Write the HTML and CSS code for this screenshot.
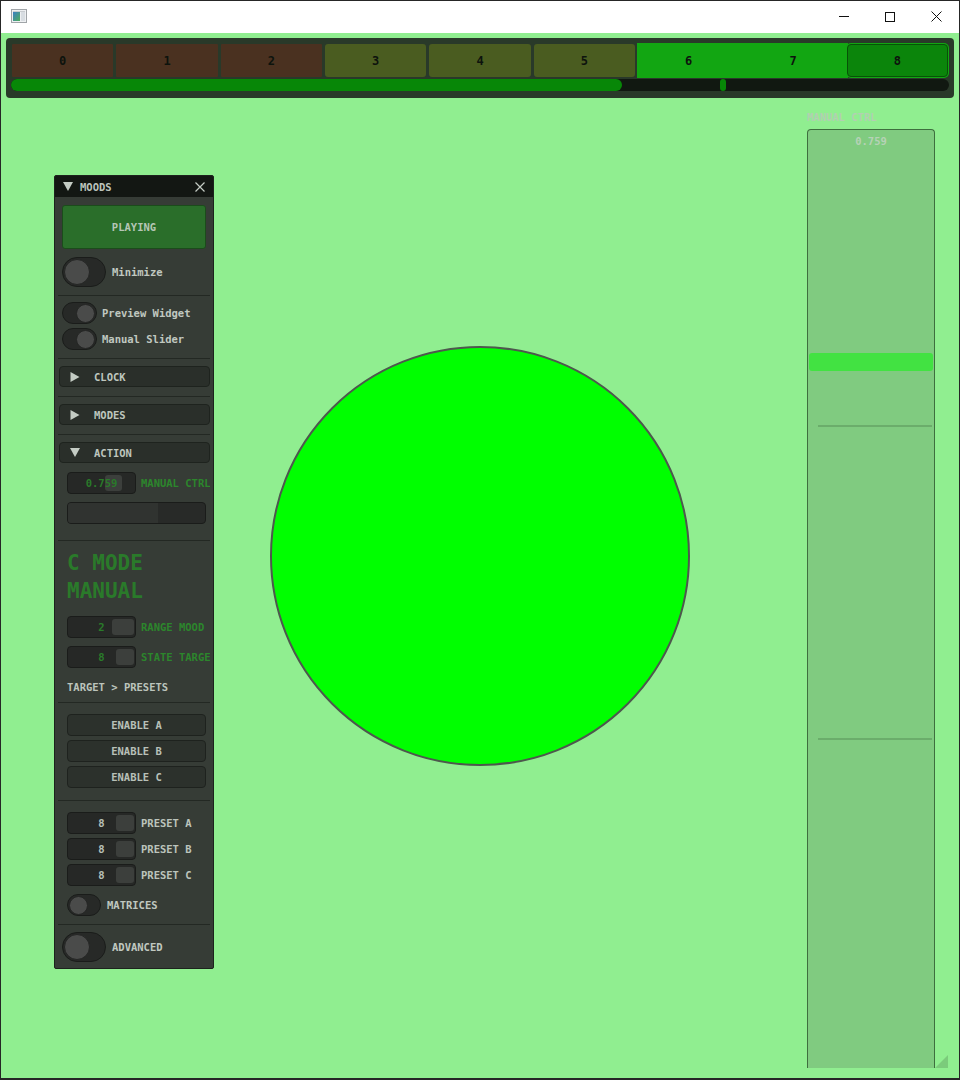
FILE: index.html
```html
<!DOCTYPE html>
<html>
<head>
<meta charset="utf-8">
<title>Moods</title>
<link rel="stylesheet" href="styles.css">
</head>
<body>
<div class="window">
  <div class="titlebar">
    <svg class="app-icon" width="16" height="14" viewBox="0 0 16 14">
      <defs>
        <linearGradient id="ig" x1="0" y1="0" x2="1" y2="1">
          <stop offset="0" stop-color="#3b7fc4"/>
          <stop offset="1" stop-color="#4fae5a"/>
        </linearGradient>
      </defs>
      <rect x="0.5" y="0.5" width="15" height="13" fill="#eef0f2" stroke="#a0a4a8"/>
      <rect x="2" y="3" width="7" height="9" fill="url(#ig)"/>
      <rect x="10" y="3" width="4" height="9" fill="#d8dde2"/>
      <rect x="2" y="2" width="12" height="1" fill="#c8ccd0"/>
    </svg>
    <div class="controls">
      <div class="ctl"><svg width="10" height="10" viewBox="0 0 10 10"><line x1="0" y1="4.5" x2="10.5" y2="4.5" stroke="#111" stroke-width="1"/></svg></div>
      <div class="ctl"><svg width="10" height="10" viewBox="0 0 10 10"><rect x="0.5" y="0.5" width="9" height="9" fill="none" stroke="#111" stroke-width="1"/></svg></div>
      <div class="ctl"><svg width="11" height="11" viewBox="0 0 11 11"><path d="M0.5 0.5 L10.5 10.5 M10.5 0.5 L0.5 10.5" stroke="#111" stroke-width="1"/></svg></div>
    </div>
  </div>

  <div class="canvas">
    <div class="topbar">
      <div class="cells">
        <div class="cell c-brown">0</div>
        <div class="cell c-brown">1</div>
        <div class="cell c-brown">2</div>
        <div class="cell c-olive">3</div>
        <div class="cell c-olive">4</div>
        <div class="cell c-olive">5</div>
        <div class="cell c-green">6</div>
        <div class="cell c-green">7</div>
        <div class="cell c-active">8</div>
      </div>
      <div class="progress">
        <div class="progress-fill" style="width:611px"></div>
        <div class="progress-mark" style="left:709px"></div>
      </div>
    </div>

    <div class="moods">
      <div class="moods-head">
        <svg class="tri" width="10" height="9" viewBox="0 0 10 9"><path d="M0 0 H10 L5 9 Z" fill="#c4ccc4"/></svg>
        <span class="moods-title">MOODS</span>
        <svg class="close" width="10" height="10" viewBox="0 0 10 10"><path d="M0.5 0.5 L9.5 9.5 M9.5 0.5 L0.5 9.5" stroke="#c4ccc4" stroke-width="1.2"/></svg>
      </div>
      <div class="moods-body">
        <div class="play">PLAYING</div>

        <div class="trow mt8">
          <div class="toggle lg"><div class="knob"></div></div>
          <span class="tlabel">Minimize</span>
        </div>

        <div class="sep mt8"></div>

        <div class="trow sm-row mt6">
          <div class="toggle sm on"><div class="knob"></div></div>
          <span class="tlabel">Preview Widget</span>
        </div>
        <div class="trow sm-row mt4">
          <div class="toggle sm on"><div class="knob"></div></div>
          <span class="tlabel">Manual Slider</span>
        </div>

        <div class="sep mt8"></div>

        <div class="hdr mt7">
          <svg class="hdr-tri" width="9" height="10" viewBox="0 0 9 10"><path d="M0 0 L9 5 L0 10 Z" fill="#c4ccc4"/></svg>
          <span>CLOCK</span>
        </div>

        <div class="sep mt9"></div>

        <div class="hdr mt7">
          <svg class="hdr-tri" width="9" height="10" viewBox="0 0 9 10"><path d="M0 0 L9 5 L0 10 Z" fill="#c4ccc4"/></svg>
          <span>MODES</span>
        </div>

        <div class="sep mt9"></div>

        <div class="hdr mt7">
          <svg class="hdr-tri" width="10" height="9" viewBox="0 0 10 9"><path d="M0 0 H10 L5 9 Z" fill="#c4ccc4"/></svg>
          <span>ACTION</span>
        </div>

        <div class="irow mt9">
          <div class="drag"><div class="grab" style="left:37px;width:17px"></div><div class="val">0.759</div></div>
          <span class="ilabel green">MANUAL CTRL</span>
        </div>

        <div class="slider mt8"><div class="slider-fill" style="width:90px"></div></div>

        <div class="sep mt16"></div>

        <div class="cmode">C MODE<br>MANUAL</div>

        <div class="irow mt11">
          <div class="drag"><div class="grab" style="left:44px;width:22px"></div><div class="val">2</div></div>
          <span class="ilabel green">RANGE MOOD</span>
        </div>
        <div class="irow mt8">
          <div class="drag"><div class="grab" style="left:48px;width:18px"></div><div class="val">8</div></div>
          <span class="ilabel green">STATE TARGE</span>
        </div>

        <div class="crumb">TARGET &gt; PRESETS</div>

        <div class="sep mt8"></div>

        <div class="btn mt11">ENABLE A</div>
        <div class="btn mt4">ENABLE B</div>
        <div class="btn mt4">ENABLE C</div>

        <div class="sep mt12"></div>

        <div class="irow mt11">
          <div class="drag"><div class="grab" style="left:48px;width:18px"></div><div class="val light">8</div></div>
          <span class="ilabel">PRESET A</span>
        </div>
        <div class="irow mt4">
          <div class="drag"><div class="grab" style="left:48px;width:18px"></div><div class="val light">8</div></div>
          <span class="ilabel">PRESET B</span>
        </div>
        <div class="irow mt4">
          <div class="drag"><div class="grab" style="left:48px;width:18px"></div><div class="val light">8</div></div>
          <span class="ilabel">PRESET C</span>
        </div>

        <div class="trow indent mt8">
          <div class="toggle md"><div class="knob"></div></div>
          <span class="tlabel caps">MATRICES</span>
        </div>

        <div class="sep mt8"></div>

        <div class="trow mt7">
          <div class="toggle lg"><div class="knob"></div></div>
          <span class="tlabel caps">ADVANCED</span>
        </div>
      </div>
    </div>

    <div class="orb"></div>

    <div class="vwidget">
      <div class="vlabel">MANUAL CTRL</div>
      <div class="vbox">
        <div class="vval">0.759</div>
        <div class="vgrab" style="top:223px"></div>
        <div class="vline" style="top:295px"></div>
        <div class="vline" style="top:608px"></div>
      </div>
    </div>

    <div class="grip"></div>
  </div>
</div>
</body>
</html>
```

FILE: styles.css
```css
html, body {
  margin: 0;
  padding: 0;
  background: #ffffff;
}

.window {
  width: 960px;
  height: 1080px;
  box-sizing: border-box;
  border: 1px solid #262626;
  border-bottom-width: 2px;
  display: flex;
  flex-direction: column;
  font-family: "DejaVu Sans Mono", "Liberation Mono", monospace;
  font-size: 10.5px;
}

.titlebar {
  height: 32px;
  flex: none;
  background: #ffffff;
  display: flex;
  align-items: center;
  padding-left: 10px;
}

.app-icon {
  margin-top: -3px;
}

.controls {
  margin-left: auto;
  display: flex;
  height: 100%;
}

.ctl {
  width: 46px;
  height: 100%;
  display: flex;
  align-items: center;
  justify-content: center;
}

.ctl svg {
  margin-top: -1px;
}

.canvas {
  flex: 1;
  position: relative;
  background: #90ee90;
  overflow: hidden;
}

/* ---------- top bar ---------- */
.topbar {
  margin: 5px 5px 0 5px;
  height: 60px;
  box-sizing: border-box;
  background: #293929;
  border-radius: 4px;
  padding: 6px 6px 0 6px;
}

.cells {
  display: grid;
  grid-template-columns: repeat(9, 1fr);
  column-gap: 3px;
  height: 33px;
}

.cell {
  display: flex;
  align-items: center;
  justify-content: center;
  font-weight: bold;
  font-size: 12px;
  color: #0d130d;
}

.c-brown {
  background: #4a3120;
  border-radius: 1px;
}

.c-olive {
  background: #4a5c20;
  border-radius: 3px;
}

.c-green {
  background: #12a612;
  box-shadow: 0 0 0 1px #12a612, 3px 0 0 1px #12a612;
}

.c-active {
  background: #0b850b;
  border: 1.5px solid #075207;
  border-radius: 4px;
  box-shadow: 0 0 0 1px #12a612;
}

.progress {
  position: relative;
  margin: 2px -1px 0 -1px;
  height: 12px;
  background: #111811;
  border-radius: 6px;
}

.progress-fill {
  height: 100%;
  background: #078707;
  border-radius: 6px;
}

.progress-mark {
  position: absolute;
  top: 0;
  width: 6px;
  height: 12px;
  background: #078707;
  border-radius: 3px;
}

/* ---------- moods window ---------- */
.moods {
  position: absolute;
  left: 53px;
  top: 142px;
  width: 160px;
  height: 794px;
  box-sizing: border-box;
  border: 1px solid #1d231d;
  border-radius: 2px;
  background: #363c36;
  overflow: hidden;
  color: #bec6be;
}

.moods-head {
  height: 21px;
  background: #131713;
  display: flex;
  align-items: center;
  padding: 0 8px;
}

.moods-title {
  margin-left: 7px;
  font-weight: bold;
  color: #bcc4bc;
}

.moods-head .close {
  margin-left: auto;
}

.moods-body {
  display: flex;
  flex-direction: column;
  padding: 0 7px;
}

.mt4 { margin-top: 4px; }
.mt6 { margin-top: 6px; }
.mt7 { margin-top: 7px; }
.mt8 { margin-top: 8px; }
.mt9 { margin-top: 9px; }
.mt11 { margin-top: 11px; }
.mt12 { margin-top: 12px; }
.mt16 { margin-top: 16px; }

.play {
  margin-top: 8px;
  height: 44px;
  box-sizing: border-box;
  background: #2a6e2a;
  border: 1px solid #1b4c1b;
  border-radius: 3px;
  display: flex;
  align-items: center;
  justify-content: center;
  font-weight: bold;
  color: #b6c6b6;
}

.trow {
  display: flex;
  align-items: center;
}

.tlabel {
  margin-left: 6px;
  color: #c0c8c0;
  font-weight: bold;
}

.sm-row .tlabel {
  margin-left: 5px;
}

.toggle {
  position: relative;
  flex: none;
  box-sizing: border-box;
  background: #272927;
  border: 1px solid #1a1c1a;
}

.toggle .knob {
  position: absolute;
  top: 50%;
  box-sizing: border-box;
  background: #4a4b4a;
  border: 1px solid #252625;
  border-radius: 50%;
}

.toggle.lg {
  width: 44px;
  height: 30px;
  border-radius: 15px;
}

.toggle.lg .knob {
  left: 1px;
  width: 26px;
  height: 26px;
  margin-top: -13px;
}

.toggle.sm {
  width: 35px;
  height: 22px;
  border-radius: 11px;
}

.toggle.sm .knob {
  right: 1px;
  width: 19px;
  height: 19px;
  margin-top: -9.5px;
}

.toggle.md {
  width: 34px;
  height: 22px;
  border-radius: 11px;
}

.toggle.md .knob {
  left: 1px;
  width: 19px;
  height: 19px;
  margin-top: -9.5px;
}

.indent {
  margin-left: 5px;
}

.trow.indent .tlabel {
  margin-left: 6px;
}

.sep {
  height: 1px;
  margin-left: -4px;
  margin-right: -4px;
  background: #232823;
}

.hdr {
  height: 21px;
  box-sizing: border-box;
  margin-left: -3px;
  margin-right: -4px;
  background: #2a2f2a;
  border: 1px solid #1e231e;
  border-radius: 4px;
  display: flex;
  align-items: center;
  padding-left: 10px;
  font-weight: bold;
  color: #bec6be;
}

.hdr-tri {
  flex: none;
  width: 10px;
  margin-right: 14px;
}

.irow {
  display: flex;
  align-items: center;
  margin-left: 5px;
  margin-right: -4px;
  overflow: hidden;
  white-space: nowrap;
}

.drag {
  position: relative;
  flex: none;
  width: 69px;
  height: 22px;
  box-sizing: border-box;
  background: #262826;
  border: 1px solid #1a1c1a;
  border-radius: 4px;
}

.drag .grab {
  position: absolute;
  top: 2px;
  bottom: 2px;
  background: #3c3f3c;
  border-radius: 3px;
}

.drag .val {
  position: relative;
  text-align: center;
  line-height: 20px;
  color: #2a7a2a;
  font-weight: bold;
}

.drag .val.light {
  color: #b8c0b8;
}

.ilabel {
  margin-left: 5px;
  font-weight: bold;
  color: #bcc4bc;
}

.ilabel.green {
  color: #2c862c;
}

.slider {
  position: relative;
  margin-left: 5px;
  height: 22px;
  box-sizing: border-box;
  background: #282a28;
  border: 1px solid #1a1c1a;
  border-radius: 4px;
  overflow: hidden;
}

.slider-fill {
  height: 100%;
  background: #303330;
}

.cmode {
  margin-left: 5px;
  margin-top: 8px;
  font-size: 21px;
  line-height: 28px;
  font-weight: bold;
  color: #2a7a2a;
}

.crumb {
  margin-left: 5px;
  margin-top: 12px;
  line-height: 14px;
  font-weight: bold;
  color: #bcc4bc;
}

.btn {
  margin-left: 5px;
  height: 22px;
  box-sizing: border-box;
  background: #2c312c;
  border: 1px solid #1e221e;
  border-radius: 4px;
  display: flex;
  align-items: center;
  justify-content: center;
  font-weight: bold;
  color: #b8c0b8;
}

/* ---------- orb ---------- */
.orb {
  position: absolute;
  left: 269px;
  top: 313px;
  width: 420px;
  height: 420px;
  box-sizing: border-box;
  border: 2px solid #4d584d;
  border-radius: 50%;
  background: #00ff00;
}

/* ---------- vertical slider ---------- */
.vwidget {
  position: absolute;
  left: 806px;
  top: 77px;
  width: 128px;
  display: flex;
  flex-direction: column;
}

.vlabel {
  line-height: 14px;
  font-weight: bold;
  color: #b2d0b2;
}

.vbox {
  position: relative;
  margin-top: 5px;
  height: 939px;
  box-sizing: border-box;
  background: #80cb80;
  border: 1px solid #3e6e3e;
  border-bottom: none;
  border-radius: 4px 4px 0 0;
}

.vval {
  text-align: center;
  padding-top: 4px;
  line-height: 14px;
  font-weight: bold;
  color: #b6d2b6;
}

.vgrab {
  position: absolute;
  left: 1px;
  right: 1px;
  height: 18px;
  background: #42e242;
  border-radius: 3px;
}

.vline {
  position: absolute;
  left: 10px;
  right: 2px;
  height: 2px;
  background: #6bad6b;
}

.grip {
  position: absolute;
  left: 934px;
  top: 1022px;
  width: 13px;
  height: 13px;
  background: #7bcb7b;
  clip-path: polygon(100% 0, 100% 100%, 0 100%);
}
```
